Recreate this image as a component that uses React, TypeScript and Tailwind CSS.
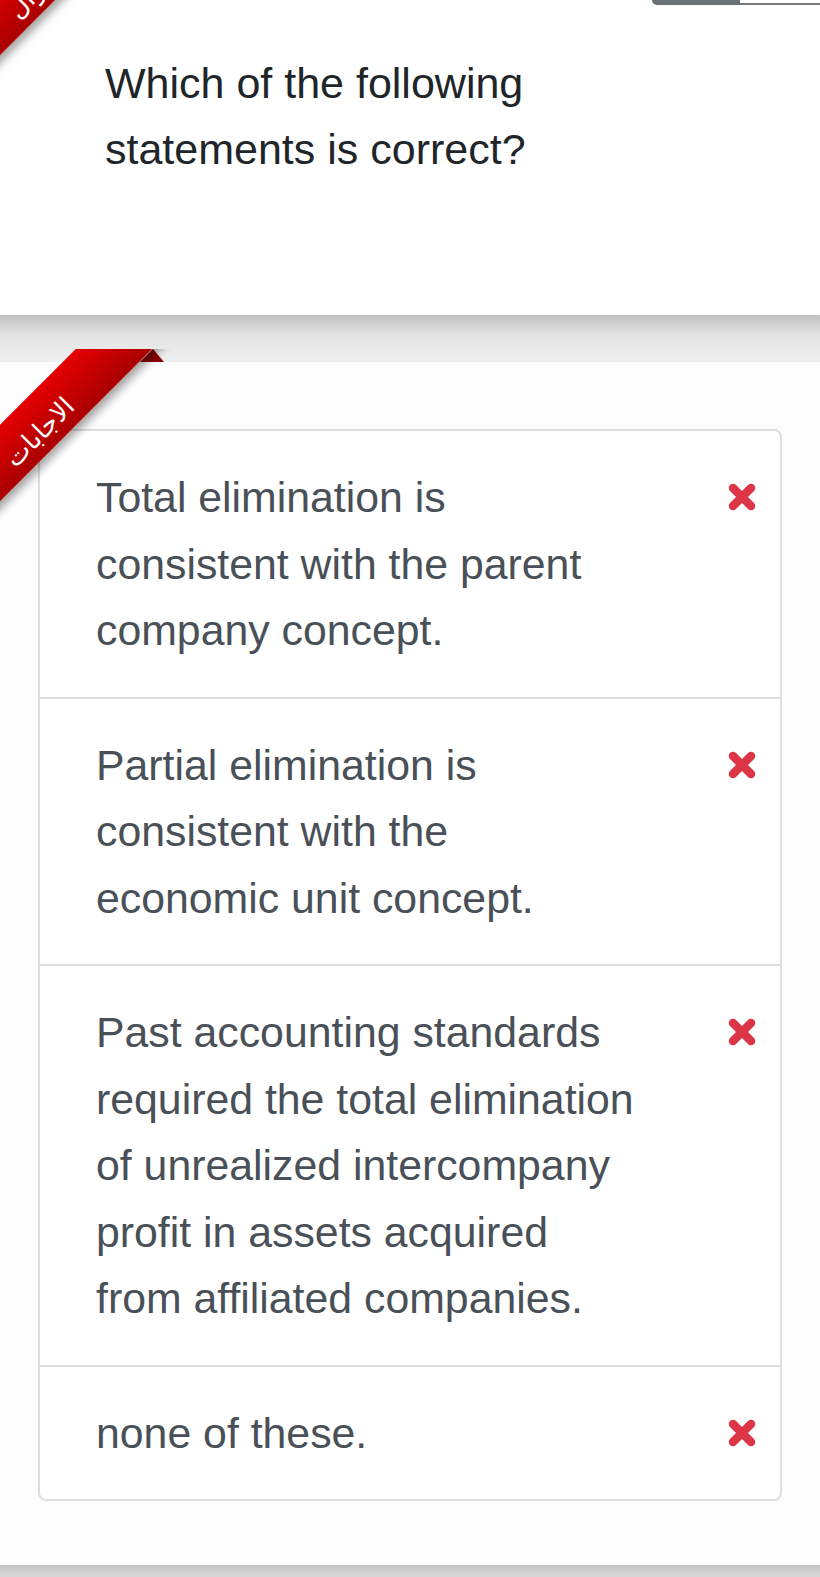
import React from "react";

const options: string[][] = [
  ["Total elimination is", "consistent with the parent", "company concept."],
  ["Partial elimination is", "consistent with the", "economic unit concept."],
  [
    "Past accounting standards",
    "required the total elimination",
    "of unrealized intercompany",
    "profit in assets acquired",
    "from affiliated companies.",
  ],
  ["none of these."],
];

function XIcon() {
  return (
    <svg width="30" height="30" viewBox="0 0 30 30" className="shrink-0 mt-[18px]">
      <path
        d="M6 6 L24 24 M24 6 L6 24"
        stroke="#dc3545"
        strokeWidth="8.5"
        strokeLinecap="round"
        fill="none"
      />
    </svg>
  );
}

export default function App() {
  return (
    <div className="relative w-[820px] h-[1577px] overflow-hidden bg-white font-['Liberation_Sans',Arial,sans-serif]">
      {/* Top card (question) */}
      <div className="h-[315px] bg-white">
        <div className="flex justify-end">
          <div className="w-[88px] h-[5px] bg-[#687078] rounded-bl-[6px]" />
          <div className="w-[80px] h-[5px] border-b-2 border-[#7a7a7a]" />
        </div>
        <p className="ml-[105px] mt-[45px] text-[43px] leading-[66px] text-[#212529]">
          Which of the following
          <br />
          statements is correct?
        </p>
      </div>

      {/* Shadow band */}
      <div className="h-[47px] bg-gradient-to-b from-[#c2c2c2] via-[#e4e4e4] via-45% to-[#efefef]" />

      {/* Answers card */}
      <div className="h-[1203px] bg-[#fdfdfd] pt-[67px]">
        <div className="mx-[38px] border-2 border-[#dedede] rounded-[8px] bg-white">
          {options.map((lines, i) => (
            <div
              key={i}
              className={
                i === 0
                  ? "flex items-start justify-between pl-[56px] pr-[23px] py-[33px]"
                  : "flex items-start justify-between pl-[56px] pr-[23px] py-[33px] border-t-2 border-[#dedede]"
              }
            >
              <div className="text-[42.8px] leading-[66.5px] text-[#495057]">
                {lines.map((l, j) => (
                  <div key={j} className="whitespace-nowrap">
                    {l}
                  </div>
                ))}
              </div>
              <XIcon />
            </div>
          ))}
        </div>
      </div>

      {/* Bottom band */}
      <div className="h-[12px] bg-gradient-to-b from-[#c4c4c4] to-[#d8d8d8]" />

      {/* Top ribbon (cut off) */}
      <div className="absolute left-0 top-[-97px] w-[200px] h-[200px] overflow-hidden">
        <div className="absolute left-[-122px] top-[49px] w-[320px] h-[54px] -rotate-45 bg-gradient-to-b from-[#e60000] to-[#a80000] shadow-[0_6px_8px_rgba(0,0,0,0.35)] flex items-center justify-center">
          <span dir="rtl" className="relative top-[6px] left-[-4px] text-white text-[26px] leading-none font-['DejaVu_Sans',sans-serif]">
            السؤال
          </span>
        </div>
      </div>

      {/* Fold triangle of answers ribbon */}
      <svg className="absolute left-[130px] top-[349px]" width="40" height="14" viewBox="0 0 40 14">
        <polygon points="23,0 34,13 10,13" fill="#8a0000" />
      </svg>

      {/* Answers ribbon */}
      <div className="absolute left-0 top-[349px] w-[200px] h-[200px] overflow-hidden">
        <div className="absolute left-[-122px] top-[49px] w-[320px] h-[54px] -rotate-45 bg-gradient-to-b from-[#e60000] to-[#a80000] shadow-[0_6px_8px_rgba(0,0,0,0.35)] flex items-center justify-center">
          <span dir="rtl" className="relative top-[6px] left-[-4px] text-white text-[26px] leading-none font-['DejaVu_Sans',sans-serif]">
            الاجابات
          </span>
        </div>
      </div>
    </div>
  );
}
